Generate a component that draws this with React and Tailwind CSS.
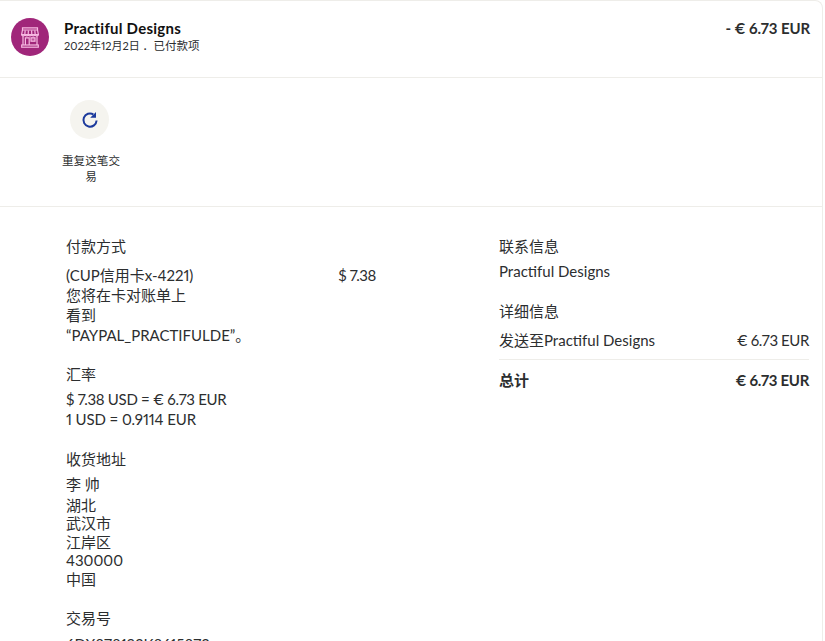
import React from "react";

function Heading({ children, className = "" }) {
  return <div className={`text-[15px] leading-[20px] text-[#2c2e2f] ${className}`}>{children}</div>;
}

function StoreIcon() {
  return (
    <svg width="18" height="21" viewBox="0 0 18 21" fill="none" stroke="#f7b9e2" strokeWidth="1.2">
      <path d="M1.5 .8h15v2.2h-15z" />
      <path d="M1.5 3 .6 7.6h16.8L16.5 3" />
      <path d="M4.2 3.4 3.8 7.4M7.4 3.4 7.2 7.4M10.6 3.4l.2 4M13.8 3.4l.4 4" />
      <path d="M.6 7.6c0 1.6 3.2 1.6 3.4 0 .2 1.6 3.2 1.6 3.4 0 .2 1.6 3 1.6 3.2 0 .2 1.6 3.2 1.6 3.4 0 .2 1.6 3.4 1.6 3.4 0" />
      <path d="M2 9v9M16 9v9" />
      <path d="M4.4 18v-7.2h3.8V18" />
      <rect x="10" y="10.8" width="4" height="3.4" fill="#f7b9e2" fillOpacity="0.35" />
      <rect x=".7" y="18" width="16.6" height="2.2" />
    </svg>
  );
}

export default function App() {
  return (
    <div className="h-[641px] w-[825px] overflow-hidden bg-white font-['Lato','Noto_Sans_CJK_SC',sans-serif] text-[#2c2e2f] proportional-nums">
      <div className="h-[700px] w-[823px] rounded-tr-[8px] border-r border-t border-[#eeede9]">
        <header className="flex h-[77px] items-start border-b border-[#eeede9] pl-[11px] pr-[12px] pt-[17px]">
          <div className="flex h-[38px] w-[38px] items-center justify-center rounded-full bg-[#a0267a]">
            <StoreIcon />
          </div>
          <div className="ml-[15px]">
            <div className="text-[15px] font-bold leading-[20px] tracking-[0.25px] text-[#111]">Practiful Designs</div>
            <div className="mt-[1px] text-[11px] leading-[14px] text-[#2c2e2f]">
              2022年12月2日 ．<span className="text-[11.5px]">已付款项</span>
            </div>
          </div>
          <div className="ml-auto text-[15px] font-bold leading-[20px] tracking-[-0.1px] text-[#2c2e2f]">- € 6.73 EUR</div>
        </header>

        <section className="h-[129px] border-b border-[#eeede9] pl-[60px] pt-[22px]">
          <div className="flex w-[62px] flex-col items-center">
            <div className="mr-[3px] flex h-[39px] w-[39px] items-center justify-center rounded-full bg-[#f5f4ef]">
              <svg width="18" height="18" viewBox="0 0 18 18" fill="none" stroke="#1c3a9c" strokeWidth="2">
                <path d="M15.6 9.5A6.6 6.6 0 1 1 12.4 3.4" />
                <path fill="#1c3a9c" stroke="none" d="M15 1v5.8H9.2z" />
              </svg>
            </div>
            <div className="mt-[14px] text-center text-[11.6px] leading-[16px] text-[#2c2e2f]">重复这笔交易</div>
          </div>
        </section>

        <section className="flex pl-[66px] pr-[13px] pt-[29px]">
          <div className="w-[310px]">
            <Heading>付款方式</Heading>
            <div className="mt-[9px] flex justify-between text-[15px] leading-[20px]">
              <div className="w-[190px]">
                <div>(CUP信用卡x-4221)</div>
                <div className="w-[130px]">您将在卡对账单上看到</div>
                <div>“PAYPAL_PRACTIFULDE”。</div>
              </div>
              <div className="tracking-[-0.4px]">$ 7.38</div>
            </div>

            <Heading className="mt-[19px]">汇率</Heading>
            <div className="mt-[5px] text-[15px] leading-[20px]">
              <div className="tracking-[-0.3px]">$ 7.38 USD = € 6.73 EUR</div>
              <div className="tracking-[-0.1px]">1 USD = 0.9114 EUR</div>
            </div>

            <Heading className="mt-[20px]">收货地址</Heading>
            <div className="mt-[6px] text-[15px] leading-[18.5px]">
              <div className="mb-[2px]">李 帅</div>
              <div>湖北</div>
              <div>武汉市</div>
              <div>江岸区</div>
              <div>430000</div>
              <div>中国</div>
            </div>

            <Heading className="mt-[20px]">交易号</Heading>
            <div className="mt-[6px] text-[15px] leading-[20px]">6DX878193K8615872</div>
          </div>

          <div className="ml-[123px] flex-1">
            <Heading>联系信息</Heading>
            <div className="mt-[5px] text-[15px] leading-[20px]">Practiful Designs</div>
            <Heading className="mt-[20px]">详细信息</Heading>
            <div className="mt-[9px] flex justify-between border-b border-[#eeede9] pb-[9px] text-[15px] leading-[20px]">
              <span>发送至Practiful Designs</span>
              <span className="tracking-[-0.4px]">€ 6.73 EUR</span>
            </div>
            <div className="mt-[10px] flex justify-between text-[15px] font-bold leading-[20px]">
              <span>总计</span>
              <span className="tracking-[-0.3px]">€ 6.73 EUR</span>
            </div>
          </div>
        </section>
      </div>
    </div>
  );
}
